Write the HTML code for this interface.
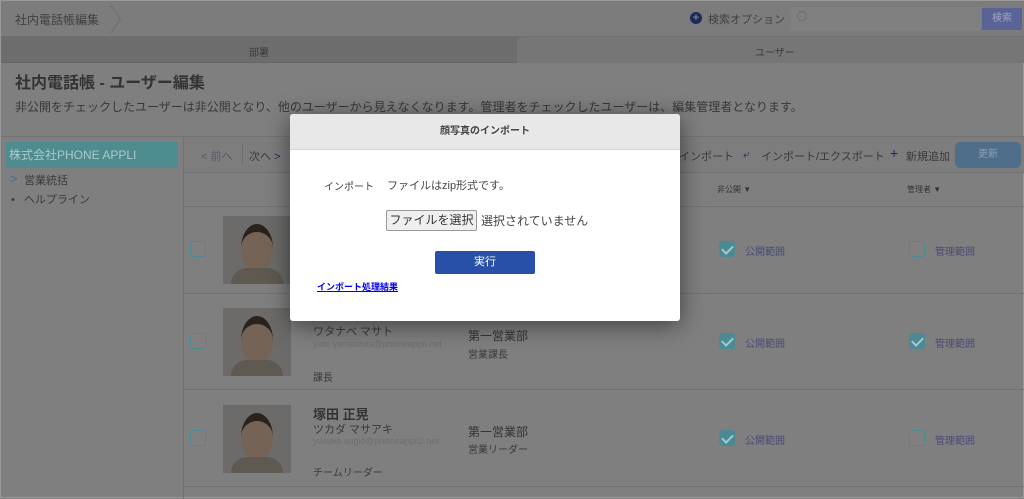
<!DOCTYPE html>
<html><head><meta charset="utf-8"><style>
*{box-sizing:border-box;margin:0;padding:0}
body{width:1024px;height:498px;overflow:hidden;position:relative;font-family:"Liberation Sans","Noto Sans CJK JP",sans-serif;background:#7f7f7f;color:#333;font-size:12px;border:1px solid #9a9a9a}
.a{position:absolute}
.cb{position:absolute;width:16px;height:16px;border:1px solid #4a8a94;border-radius:3px;background:#808080}
.cb.on{background:#4a8a94;border-color:#4a8a94}
.cb.on:after{content:"";position:absolute;left:4px;top:1px;width:5px;height:9px;border:solid #a8c6ca;border-width:0 2px 2px 0;transform:rotate(45deg)}
.photo{position:absolute;width:68px;height:68px;background:#6c6b69}
.photo:before{content:"";position:absolute;left:18px;top:8px;width:32px;height:40px;border-radius:50%;background:#756455;border-top:8px solid #2a221c}
.photo:after{content:"";position:absolute;left:8px;top:52px;width:52px;height:16px;border-radius:20px 20px 0 0;background:#5e5a52}
.lbl{position:absolute;font-size:10px;color:#4a4a7a}
.t{color:#3a3a3a}
</style></head><body>
<div class="a" style="left:0;top:0;width:1024px;height:36px;background:#7c7c7c;border-bottom:1px solid #707070"></div>
<div class="a t" style="left:14px;top:10px;font-size:12px;color:#404040">社内電話帳編集</div>
<div class="a" style="left:110px;top:4px;width:10px;height:14px;border-right:1px solid #6a6a6a;transform:skewX(35deg);transform-origin:bottom"></div>
<div class="a" style="left:110px;top:18px;width:10px;height:14px;border-right:1px solid #6a6a6a;transform:skewX(-35deg);transform-origin:top"></div>
<div class="a" style="left:689px;top:11px;width:12px;height:12px;border-radius:50%;background:#1d2a5a;color:#7f7f7f;font-size:11px;line-height:12px;text-align:center;font-weight:bold">+</div>
<div class="a" style="left:707px;top:10px;font-size:11px;color:#404040">検索オプション</div>
<div class="a" style="left:790px;top:6px;width:190px;height:24px;background:#808080"></div>
<div class="a" style="left:796px;top:10px;width:10px;height:10px;border:1px solid #6e6e6e;border-radius:50%"></div>
<div class="a" style="left:981px;top:7px;width:40px;height:22px;background:#5a6396;color:#a0a4c0;font-size:10px;text-align:center;line-height:22px">検索</div>
<div class="a" style="left:0;top:36px;width:1024px;height:26px;background:#6d6d6d;border-bottom:1px solid #666"></div>
<div class="a" style="left:516px;top:36px;width:508px;height:26px;background:#767676;border-radius:6px 0 0 0"></div>
<div class="a" style="left:248px;top:43px;font-size:10px;color:#3a3a3a">部署</div>
<div class="a" style="left:754px;top:43px;font-size:10px;color:#3a3a3a">ユーザー</div>
<div class="a" style="left:14px;top:68px;font-size:16px;font-weight:bold;color:#333">社内電話帳 - ユーザー編集</div>
<div class="a" style="left:14px;top:97px;font-size:12px;color:#383838">非公開をチェックしたユーザーは非公開となり、他のユーザーから見えなくなります。管理者をチェックしたユーザーは、編集管理者となります。</div>
<div class="a" style="left:0;top:135px;width:1024px;height:1px;background:#727272"></div>
<div class="a" style="left:182px;top:135px;width:1px;height:363px;background:#727272"></div>
<div class="a" style="left:5px;top:141px;width:172px;height:26px;background:#4e8c8f;color:#a8c8ca;font-size:12px;line-height:26px;padding-left:3px">株式会社PHONE APPLI</div>
<div class="a" style="left:9px;top:170px;color:#3a6f88;font-size:13px">&gt;</div>
<div class="a" style="left:23px;top:171px;font-size:11px;color:#3a3a3a">営業統括</div>
<div class="a" style="left:10px;top:190px;font-size:11px;color:#3a3a3a">• <span style="margin-left:6px">ヘルプライン</span></div>
<div class="a" style="left:183px;top:136px;width:841px;height:36px;background:#7d7d7d;border-bottom:1px solid #727272"></div>
<div class="a" style="left:200px;top:147px;font-size:11px;color:#5a5a6a">&lt; 前へ</div>
<div class="a" style="left:241px;top:144px;width:1px;height:20px;background:#6e6e6e"></div>
<div class="a" style="left:248px;top:147px;font-size:11px;color:#3a3a3a">次へ <span style="color:#1c2a5a">&gt;</span></div>
<div class="a" style="left:678px;top:147px;font-size:11px;color:#3a3a3a">インポート</div>
<div class="a" style="left:742px;top:146px;font-size:12px;color:#1c2a5a">&#10550;</div>
<div class="a" style="left:760px;top:147px;font-size:11px;color:#3a3a3a">インポート/エクスポート</div>
<div class="a" style="left:889px;top:144px;font-size:14px;color:#1c2a5a">+</div>
<div class="a" style="left:905px;top:147px;font-size:11px;color:#3a3a3a">新規追加</div>
<div class="a" style="left:954px;top:141px;width:66px;height:26px;background:#4e6e8a;border-radius:5px;color:#8aa0b4;font-size:10px;text-align:center;line-height:26px">更新</div>
<div class="a" style="left:716px;top:183px;font-size:8px;color:#333">非公開 ▼</div>
<div class="a" style="left:906px;top:183px;font-size:8px;color:#333">管理者 ▼</div>
<div class="a" style="left:183px;top:205px;width:841px;height:1px;background:#737373"></div>
<div class="a" style="left:183px;top:292px;width:841px;height:1px;background:#737373"></div>
<div class="a" style="left:183px;top:388px;width:841px;height:1px;background:#737373"></div>
<div class="a" style="left:183px;top:485px;width:841px;height:1px;background:#737373"></div>
<div class="cb" style="left:189px;top:240px"></div>
<div class="photo" style="left:222px;top:215px"></div>
<div class="cb on" style="left:718px;top:240px"></div><div class="lbl" style="left:744px;top:242px">公開範囲</div>
<div class="cb" style="left:908px;top:240px"></div><div class="lbl" style="left:934px;top:242px">管理範囲</div>
<div class="cb" style="left:189px;top:332px"></div>
<div class="photo" style="left:222px;top:307px"></div>
<div class="a" style="left:312px;top:322px;font-size:11px;color:#3a3a3a">ワタナベ マサト</div>
<div class="a" style="left:312px;top:338px;font-size:9px;color:#6e6e6e;width:120px">yuto.yamashita@phoneappli.net</div>
<div class="a" style="left:312px;top:368px;font-size:10px;color:#3a3a3a">課長</div>
<div class="a" style="left:467px;top:326px;font-size:12px;color:#333">第一営業部</div>
<div class="a" style="left:467px;top:345px;font-size:10px;color:#3a3a3a">営業課長</div>
<div class="cb on" style="left:718px;top:332px"></div><div class="lbl" style="left:744px;top:334px">公開範囲</div>
<div class="cb on" style="left:908px;top:332px"></div><div class="lbl" style="left:934px;top:334px">管理範囲</div>
<div class="cb" style="left:189px;top:429px"></div>
<div class="photo" style="left:222px;top:404px"></div>
<div class="a" style="left:312px;top:403px;font-size:13px;font-weight:bold;color:#333">塚田 正晃</div>
<div class="a" style="left:312px;top:420px;font-size:11px;color:#3a3a3a">ツカダ マサアキ</div>
<div class="a" style="left:312px;top:435px;font-size:9px;color:#6e6e6e;width:120px">yusuke.sugio@phoneappli2.net</div>
<div class="a" style="left:312px;top:463px;font-size:10px;color:#3a3a3a">チームリーダー</div>
<div class="a" style="left:467px;top:422px;font-size:12px;color:#333">第一営業部</div>
<div class="a" style="left:467px;top:440px;font-size:10px;color:#3a3a3a">営業リーダー</div>
<div class="cb on" style="left:718px;top:429px"></div><div class="lbl" style="left:744px;top:431px">公開範囲</div>
<div class="cb" style="left:908px;top:429px"></div><div class="lbl" style="left:934px;top:431px">管理範囲</div>
<div class="a" style="left:289px;top:113px;width:390px;height:207px;background:#fff;border-radius:3px;box-shadow:0 4px 24px rgba(0,0,0,0.5);overflow:hidden">
 <div style="height:36px;background:#e8e8e8;border-bottom:1px solid #d5d5d5;text-align:center;line-height:36px;font-size:10px;font-weight:bold;color:#444">顔写真のインポート</div>
 <div class="a" style="left:34px;top:64px;font-size:10px;color:#444">インポート</div>
 <div class="a" style="left:97px;top:63px;font-size:11px;color:#444">ファイルはzip形式です。</div>
 <div class="a" style="left:96px;top:96px;width:91px;height:21px;border:1px solid #999;background:#efefef;border-radius:2px;font-size:12px;color:#333;text-align:center;line-height:19px">ファイルを選択</div>
 <div class="a" style="left:191px;top:98px;font-size:12px;color:#444">選択されていません</div>
 <div class="a" style="left:145px;top:137px;width:100px;height:23px;background:#2850a8;border-radius:2px;color:#fff;font-size:11px;text-align:center;line-height:23px">実行</div>
 <div class="a" style="left:27px;top:166px;font-size:9px;font-weight:bold;color:#0000ee;text-decoration:underline">インポート処理結果</div>
</div>
</body></html>
